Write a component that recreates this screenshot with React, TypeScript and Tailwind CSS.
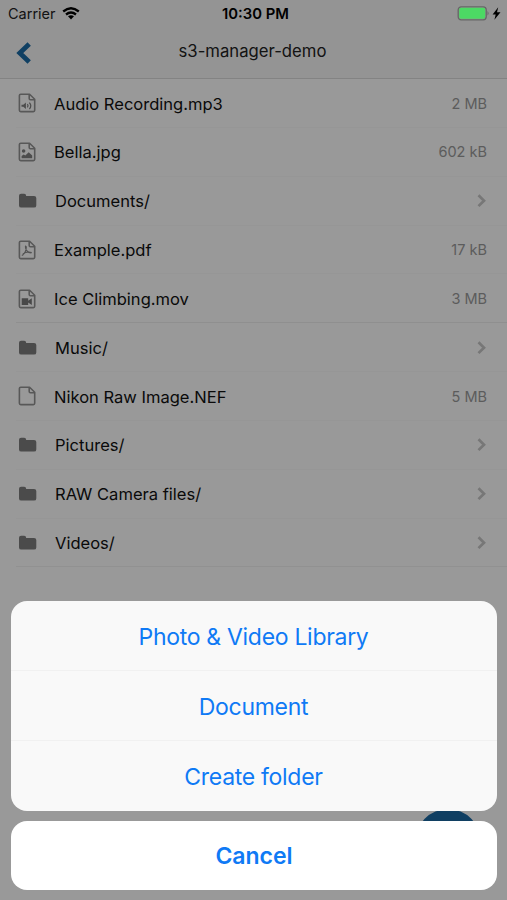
import type { ReactNode } from 'react'

type Kind = 'audio' | 'image' | 'folder' | 'pdf' | 'video' | 'file'

type Entry = {
  name: string
  kind: Kind
  size?: string
}

const entries: Entry[] = [
  { name: 'Audio Recording.mp3', kind: 'audio', size: '2 MB' },
  { name: 'Bella.jpg', kind: 'image', size: '602 kB' },
  { name: 'Documents/', kind: 'folder' },
  { name: 'Example.pdf', kind: 'pdf', size: '17 kB' },
  { name: 'Ice Climbing.mov', kind: 'video', size: '3 MB' },
  { name: 'Music/', kind: 'folder' },
  { name: 'Nikon Raw Image.NEF', kind: 'file', size: '5 MB' },
  { name: 'Pictures/', kind: 'folder' },
  { name: 'RAW Camera files/', kind: 'folder' },
  { name: 'Videos/', kind: 'folder' },
]

const actions = ['Photo & Video Library', 'Document', 'Create folder']

const glyphs: Record<Kind, ReactNode> = {
  audio: (
    <>
      <path d="M3.5 11.8h1.8l2.6-2.3v6.6l-2.6-2.3H3.5z" fill="#808080" />
      <path d="M9.4 11.2q1.3 1.6 0 3.2M11.4 9.6q2.8 3.2 0 6.4" fill="none" stroke="#808080" strokeWidth="1.2" />
    </>
  ),
  image: (
    <>
      <circle cx="5.6" cy="9" r="1.8" fill="#808080" />
      <path d="M3.6 16.2v-2.1l2.1-1.7 1.6 1.2 3.4-3.4 3.5 3.4v2.6z" fill="#808080" />
    </>
  ),
  pdf: (
    <path
      d="M7.6 5.6c-.5 1.6.2 3.6 1.2 5 1.1 1.6 2.8 2.5 4.6 2.4M8.3 6.2c.3 3.8-1.6 8-4.5 9.4M4.8 13.9c2.4-1.6 5.8-2.4 9-1.4"
      fill="none"
      stroke="#8a8a8a"
      strokeWidth="1.1"
    />
  ),
  video: (
    <path d="M3.7 9.3h6.5v2.5l3.6-2.5v6.8l-3.6-2.5v2.5H3.7z" fill="#787878" />
  ),
  file: null,
  folder: null,
}

function EntryIcon({ kind }: { kind: Kind }) {
  if (kind === 'folder') {
    return (
      <svg width="19" height="16" viewBox="0 0 19 16">
        <path
          d="M1 2.8Q1 .7 3.1.7h3.1q1.9 0 1.9 1.9v.3h7.9q2.3 0 2.3 2.2v7.3q0 2.2-2.3 2.2H3.2Q1 14.6 1 12.4z"
          fill="#7d7d7d"
        />
      </svg>
    )
  }
  return (
    <svg width="19" height="20" viewBox="0 0 19 20">
      <path
        d="M2.7 1.2h8.9l5.1 5v11.1q0 1.3-1.3 1.3H2.7q-1.3 0-1.3-1.3V2.5q0-1.3 1.3-1.3zM11.2 1.4v4.1q0 1.2 1.2 1.2h4.2"
        fill="none"
        stroke="#939393"
        strokeWidth="1.6"
        strokeLinejoin="round"
      />
      {glyphs[kind]}
    </svg>
  )
}

function StatusBar() {
  return (
    <div className="grid h-7 grid-cols-3 items-center pr-1.5 pl-2">
      <div className="flex items-center gap-[7px]">
        <span className="text-[14.5px] text-[#222]">Carrier</span>
        <svg width="18" height="13" viewBox="0 0 18 13" className="-mt-0.5 -ml-px">
          <g fill="none" stroke="#000" strokeWidth="2.3">
            <path d="M1.2 4.5Q9-2 16.8 4.5" />
            <path d="M4 7.5Q9 3.4 14 7.5" />
          </g>
          <path d="M6 9.3Q9 7 12 9.3L9 12.4z" />
        </svg>
      </div>
      <span className="pl-0.5 text-center text-[14.8px] font-semibold text-black">10:30 PM</span>
      {/* the battery stays bright while the sheet is open */}
      <div className="relative z-10 -mt-0.5 flex items-center justify-end gap-[2px]">
        <svg width="33" height="15" viewBox="0 0 33 15">
          <rect x="1.2" y=".8" width="28" height="13" rx="3" fill="none" stroke="#666" strokeWidth="1.3" />
          <rect x="2.2" y="1.8" width="26" height="11" rx="1.8" fill="#4cd964" />
          <path d="M30.5 5q2.2 2.3 0 4.6z" fill="#666" />
        </svg>
        <svg width="9" height="13" viewBox="0 0 9 13">
          <path d="M6.2.3.6 7.4h3.1L2.4 12.7 8.5 5.3H5z" />
        </svg>
      </div>
    </div>
  )
}

function Header() {
  return (
    <header className="h-[79px] shrink-0 border-b border-[#dadada] bg-[#f7f7f7]">
      <StatusBar />
      <div className="grid h-[47px] grid-cols-3 items-center px-4">
        <svg width="16" height="24" viewBox="0 0 16 24" className="mt-0.5">
          <path d="M13.2 3 3.8 12l9.4 9" fill="none" stroke="#1c6ba5" strokeWidth="4.8" />
        </svg>
        <h1 className="-ml-0.5 text-center text-[16.7px] whitespace-nowrap text-[#222]">s3-manager-demo</h1>
      </div>
    </header>
  )
}

function Row({ entry }: { entry: Entry }) {
  const folder = entry.kind === 'folder'
  return (
    <li className="ml-4 flex h-[48.85px] items-center border-b border-[#fafafa] pt-px pr-5 pl-0.5 last:border-[#f2f2f2] nth-5:border-[#efefef]">
      <EntryIcon kind={entry.kind} />
      <span className={`flex-1 pt-px text-[16.55px] text-[#111] ${folder ? 'ml-[18px]' : 'ml-[17px]'}`}>
        {entry.name}
      </span>
      {folder ? (
        <svg width="11" height="16" viewBox="0 0 11 16">
          <path d="m2.5 2.3 5.5 5.4-5.5 5.4" fill="none" stroke="#c6c6c6" strokeWidth="2.7" />
        </svg>
      ) : (
        <span className="text-[14.5px] text-[#9a9a9a]">{entry.size}</span>
      )}
    </li>
  )
}

function ActionSheet() {
  return (
    <div className="absolute inset-0 flex flex-col justify-end bg-black/40 pr-2.5 pb-2.5 pl-[11px] text-[#0f7af5]">
      <div className="mb-2.5 overflow-hidden rounded-[16px] bg-[#f9f9f9]">
        {actions.map((action) => (
          <button
            key={action}
            className="block h-[70px] w-full border-b border-[#f1f1f1] pt-[3px] pr-px text-[23px] tracking-[-0.3px] last:border-b-0 last:pt-0.5"
          >
            {action}
          </button>
        ))}
      </div>
      <button className="h-[69px] w-full rounded-[16px] bg-white pt-0.5 text-[23px] font-semibold">Cancel</button>
    </div>
  )
}

export default function App() {
  return (
    <div className="relative flex h-[900px] w-full flex-col overflow-hidden bg-white font-['Inter',sans-serif]">
      <Header />
      <ul>
        {entries.map((entry) => (
          <Row key={entry.name} entry={entry} />
        ))}
      </ul>
      <div className="absolute right-[26px] bottom-[25px] size-[66px] rounded-full bg-[#1c69a3]" />
      <ActionSheet />
    </div>
  )
}
